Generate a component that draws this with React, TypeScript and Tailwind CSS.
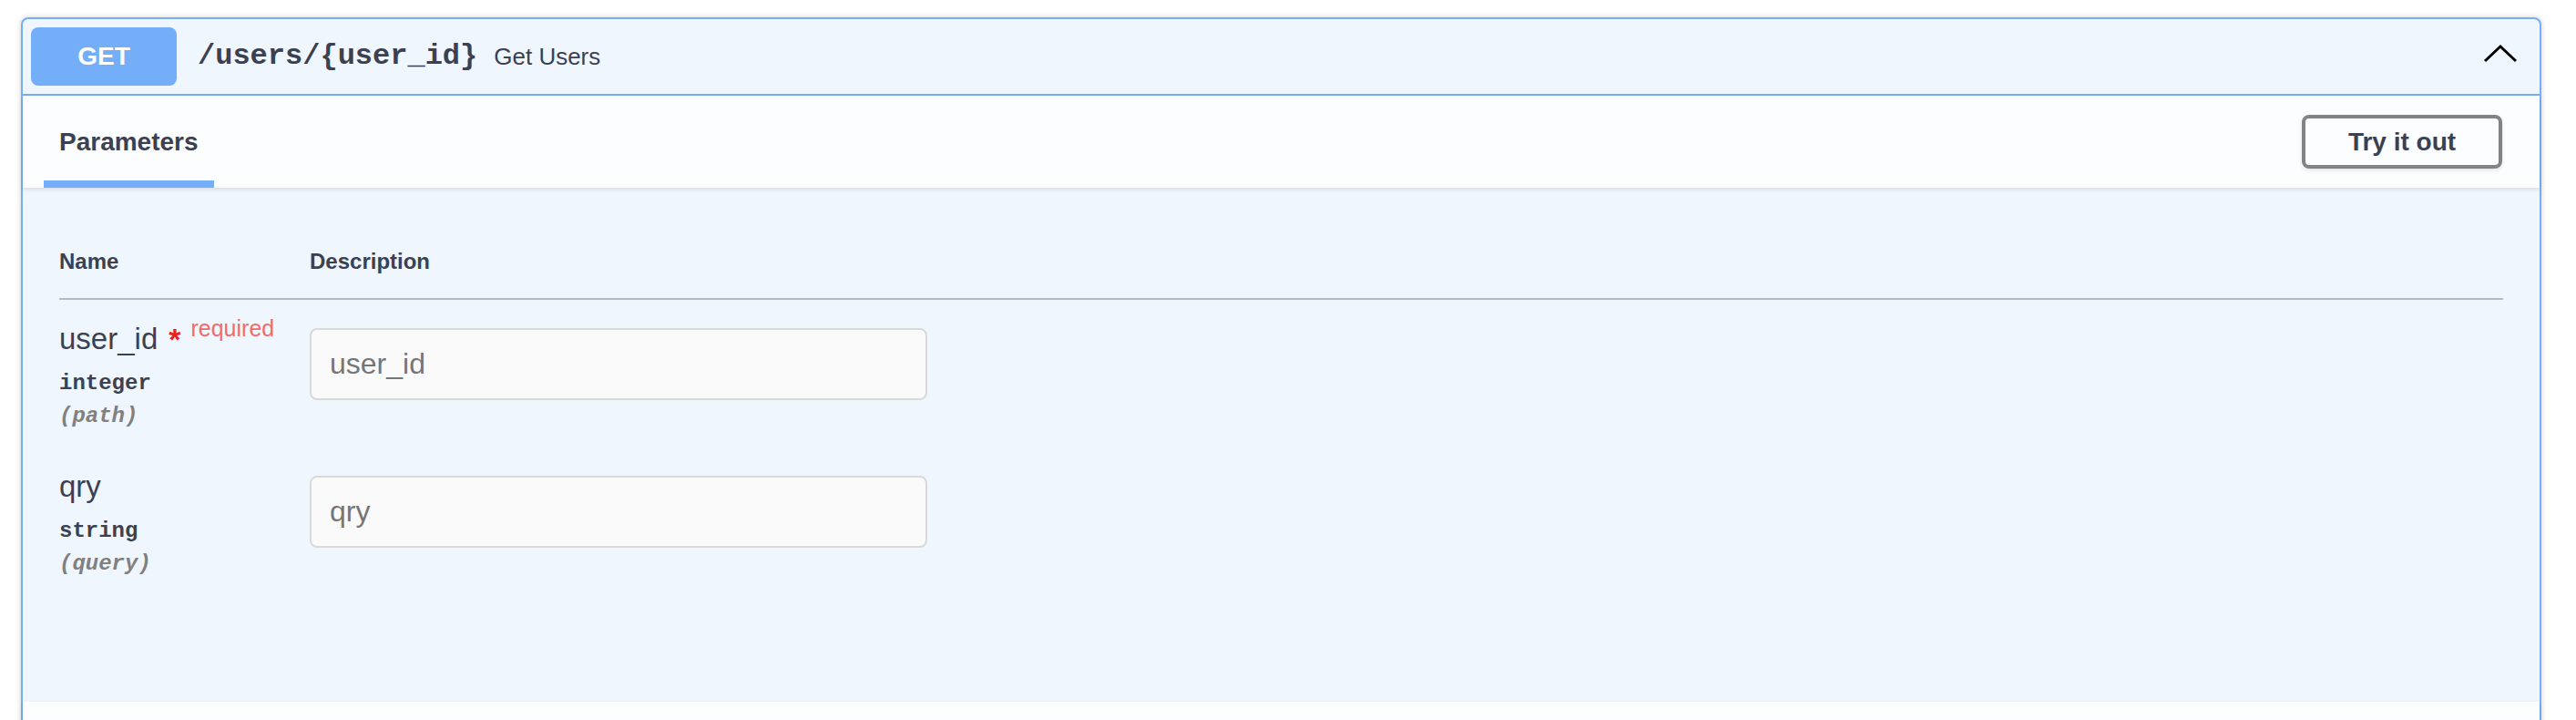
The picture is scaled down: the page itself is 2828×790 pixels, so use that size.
export default function App() {
  return (
    <div className="h-[790px] overflow-hidden bg-white pt-[19px] pl-[23px] pr-[38px] font-['Liberation_Sans',Arial,sans-serif] text-[#3b4151]">
      <div className="rounded-[8px] border-2 border-[#74adf8] bg-[#f0f6fe] shadow-[0_0_6px_rgba(0,0,0,0.19)]">
        {/* Summary header */}
        <div className="flex h-[84px] items-center border-b-2 border-[#74adf8] pl-[9px] pr-[24px]">
          <div className="flex h-[64px] w-[160px] items-center justify-center rounded-[8px] bg-[#74adf8] text-[28px] font-bold text-white">
            GET
          </div>
          <span className="ml-[23px] font-['Liberation_Mono',monospace] text-[32px] font-bold">
            /users/{"{"}user_id{"}"}
          </span>
          <span className="ml-[18px] text-[26px]">Get Users</span>
          <div className="flex-1" />
          <svg width="38" height="22" viewBox="0 0 38 22" className="mb-[6px]">
            <polyline points="2,19 19,3 36,19" fill="none" stroke="#000" strokeWidth="3" />
          </svg>
        </div>

        {/* Tab header */}
        <div className="relative flex h-[101px] items-stretch justify-between bg-[#fbfdff] shadow-[0_2px_4px_rgba(0,0,0,0.1)]">
          <div className="ml-[23px] flex items-center border-b-[8px] border-[#74adf8] px-[17px] pt-[9px]">
            <span className="text-[28px] font-bold leading-[32px]">Parameters</span>
          </div>
          <div className="mr-[41px] flex items-center">
            <button className="flex h-[59px] w-[220px] items-center justify-center rounded-[8px] border-4 border-[#838383] bg-transparent text-[28px] font-bold text-[#3b4151] shadow-[0_2px_4px_rgba(0,0,0,0.1)]">
              Try it out
            </button>
          </div>
        </div>

        {/* Parameters body */}
        <div className="h-[564px] px-[40px]">
          <div className="grid grid-cols-[275px_1fr] border-b-2 border-[#b4b9c4] pt-[67px] pb-[26px] text-[24px] font-bold leading-[28px]">
            <div>Name</div>
            <div>Description</div>
          </div>

          <ParamRow name="user_id" type="integer" loc="(path)" required />
          <ParamRow name="qry" type="string" loc="(query)" />
        </div>

        {/* Next section strip */}
        <div className="h-[40px] bg-[#fbfdff] shadow-[0_2px_4px_rgba(0,0,0,0.1)]" />
      </div>
    </div>
  );
}

function ParamRow({
  name,
  type,
  loc,
  required,
}: {
  name: string;
  type: string;
  loc: string;
  required?: boolean;
}) {
  return (
    <div className="grid grid-cols-[275px_1fr]">
      <div className="pt-[23px] pb-[20px]">
        <div className="flex items-start text-[33px] leading-[40px]">
          <span>{name}</span>
          {required && (
            <>
              <span className="ml-[12px] text-[34px] font-bold text-[#f01e1e]">*</span>
              <span className="relative top-[-12px] ml-[11px] text-[25px] leading-[40px] text-[#f46a6a]">
                required
              </span>
            </>
          )}
        </div>
        <div className="mt-[15px] font-['Liberation_Mono',monospace] text-[24px] font-bold leading-[28px]">
          {type}
        </div>
        <div className="mt-[8px] font-['Liberation_Mono',monospace] text-[24px] font-bold italic leading-[28px] text-[#808080]">
          {loc}
        </div>
      </div>
      <div className="pt-[31px]">
        <input
          placeholder={name}
          className="h-[79px] w-[678px] rounded-[8px] border-2 border-[#d9d9d9] bg-[#fafafa] pl-[20px] font-['Liberation_Sans',Arial,sans-serif] text-[32px] outline-none placeholder:text-[#767676]"
        />
      </div>
    </div>
  );
}
